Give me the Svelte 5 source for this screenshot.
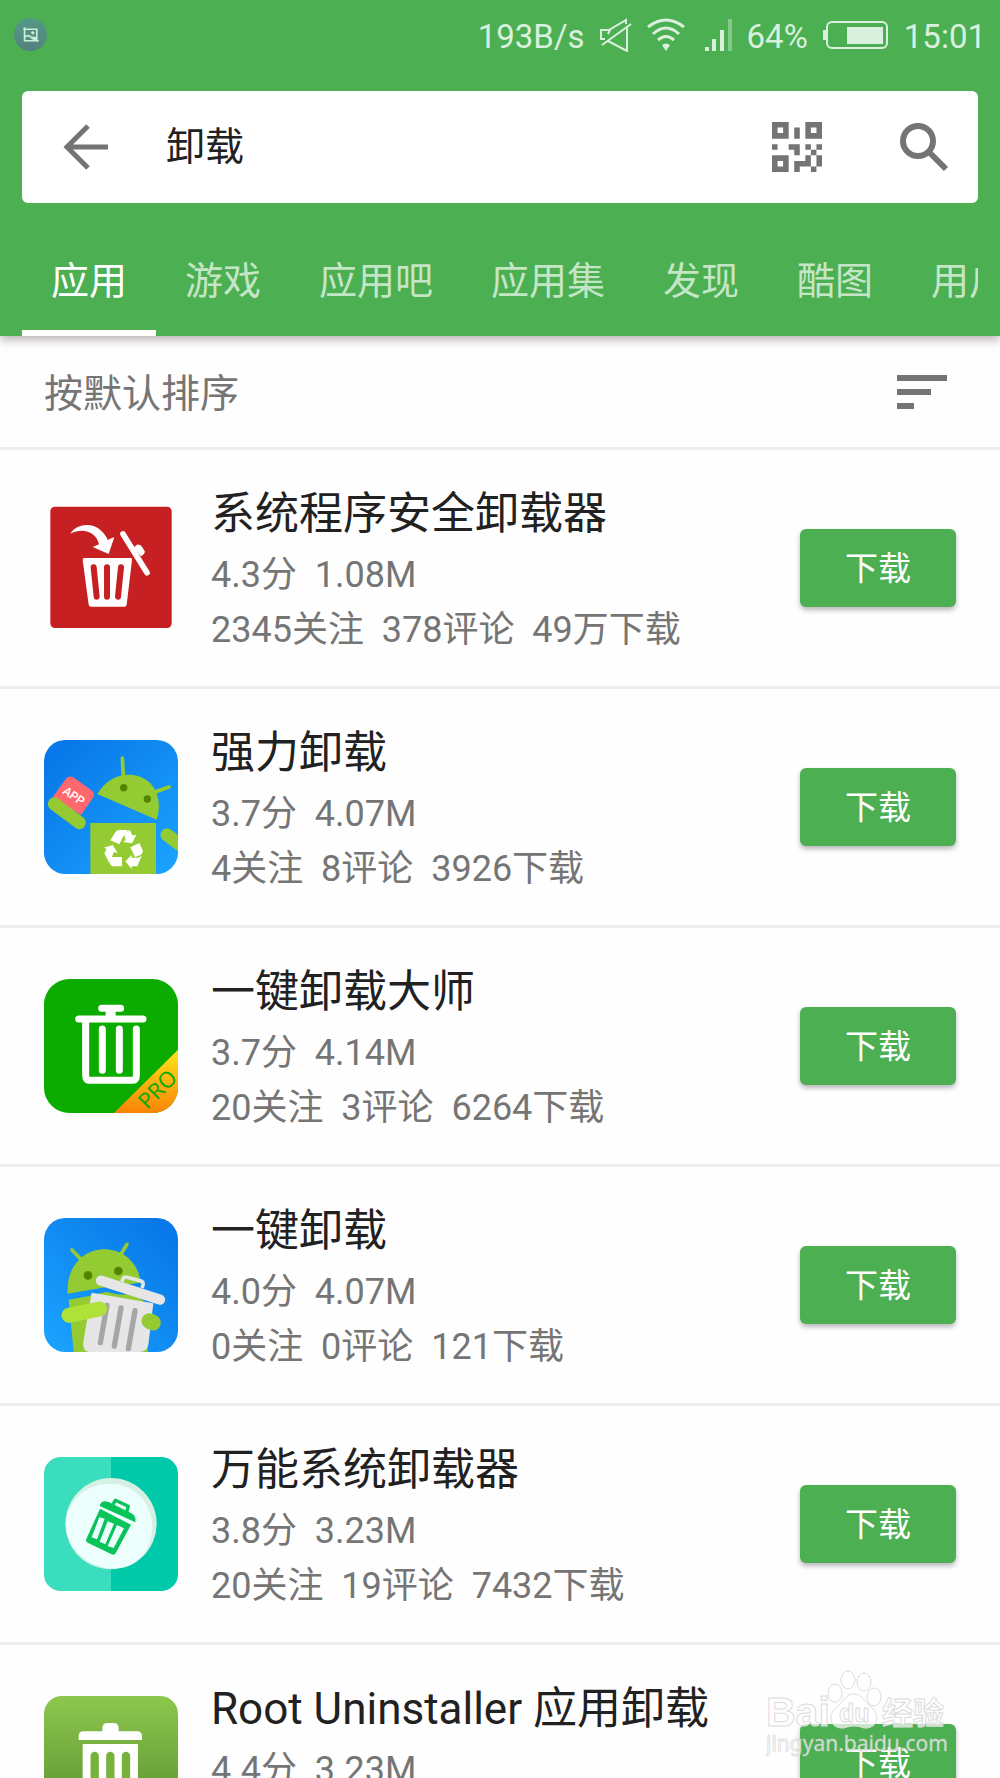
<script lang="ts">
	type App = {
		icon: string;
		name: string;
		score: string;
		size: string;
		follows: string;
		comments: string;
		downloads: string;
	};

	const tabs = ['应用', '游戏', '应用吧', '应用集', '发现', '酷图', '用户'];

	const apps: App[] = [
		{ icon: 'red', name: '系统程序安全卸载器', score: '4.3分', size: '1.08M', follows: '2345关注', comments: '378评论', downloads: '49万下载' },
		{ icon: 'recycle', name: '强力卸载', score: '3.7分', size: '4.07M', follows: '4关注', comments: '8评论', downloads: '3926下载' },
		{ icon: 'pro', name: '一键卸载大师', score: '3.7分', size: '4.14M', follows: '20关注', comments: '3评论', downloads: '6264下载' },
		{ icon: 'droid', name: '一键卸载', score: '4.0分', size: '4.07M', follows: '0关注', comments: '0评论', downloads: '121下载' },
		{ icon: 'teal', name: '万能系统卸载器', score: '3.8分', size: '3.23M', follows: '20关注', comments: '19评论', downloads: '7432下载' },
		{ icon: 'root', name: 'Root Uninstaller 应用卸载', score: '4.4分', size: '3.23M', follows: '', comments: '', downloads: '' }
	];

	let query = $state('卸载');
	let current = $state(0);
</script>

{#snippet appIcon(icon: string)}
	{#if icon === 'red'}
		<svg class="app-icon" viewBox="132 513 402 402" aria-hidden="true">
			<rect x="151" y="530" width="364" height="364" rx="14" fill="#c62022" />
			<path d="M211 611C232 579 278 578 302 601Q318 616 323 630L343 621L326 672L278 651L297 643C289 606 249 592 211 611Z" fill="#fff" />
			<path d="M369 612L441 728" stroke="#fff" stroke-width="17" stroke-linecap="round" />
			<path d="M400 653L411 644Q422 642 428 653L434 664Q436 672 423 679Z" fill="#fff" />
			<path d="M253 684H392Q397 684 396 690L380 824Q379 830 373 830H273Q267 830 266 824L248 690Q248 684 253 684Z" fill="#fff" />
			<path d="M281 712L290 800M321 712V800M363 712L354 800" stroke="#c62022" stroke-width="18" stroke-linecap="round" />
		</svg>
	{:else if icon === 'recycle'}
		<svg class="app-icon" viewBox="42 44 402 402" aria-hidden="true">
			<defs>
				<linearGradient id="sky" x1="0" y1="0" x2="1" y2="1">
					<stop offset="0.1" stop-color="#0878e8" />
					<stop offset="1" stop-color="#1ca4ff" />
				</linearGradient>
				<clipPath id="sky-clip"><rect x="42" y="44" width="402" height="402" rx="64" /></clipPath>
			</defs>
			<g clip-path="url(#sky-clip)">
				<rect x="42" y="44" width="402" height="402" fill="url(#sky)" />
				<path d="M277 98L280 155M375 200L417 185" stroke="#94cb32" stroke-width="11" stroke-linecap="round" />
				<path d="M202 206C230 158 281 137 330 154C378 172 398 226 380 283Z" fill="#94cb32" />
				<circle cx="281" cy="187" r="11" fill="#538400" />
				<circle cx="352" cy="221" r="11" fill="#538400" />
				<path d="M108 160Q119 148 133 158L182 193Q196 203 190 216L153 269L68 216Z" fill="#ff686c" />
				<text class="app-mark" transform="translate(96 202) rotate(35)">APP</text>
				<path d="M73 236L148 292" stroke="#94cb32" stroke-width="39" stroke-linecap="round" />
				<path d="M411 329L460 365" stroke="#94cb32" stroke-width="39" stroke-linecap="round" />
				<path d="M181 293H378V446H181Z" fill="#94cb32" />
				<g fill="#fff">
					<path d="M258 318Q264 314 271 314H292L276 341L268 357L241 345Z" />
					<path d="M283 329Q289 314 300 315L307 330L319 329L306 354L279 350L287 345Z" />
					<path d="M301 366L328 353L338 375Q340 384 330 390L315 395Z" />
					<path d="M335 392L322 423H305V431L286 408L305 389V397H324Z" />
					<path d="M242 395H276V423H247Q241 422 240 414Z" />
					<path d="M221 367L248 359L263 383L252 380L238 414L223 384L230 371Z" />
				</g>
			</g>
		</svg>
	{:else if icon === 'pro'}
		<svg class="app-icon" viewBox="42 40 402 402" aria-hidden="true">
			<defs>
				<linearGradient id="ribbon" x1="0" y1="0" x2="0" y2="1">
					<stop offset="0" stop-color="#ffe619" />
					<stop offset="1" stop-color="#fa8308" />
				</linearGradient>
				<clipPath id="pro-clip"><rect x="42" y="40" width="402" height="402" rx="76" /></clipPath>
			</defs>
			<g clip-path="url(#pro-clip)">
				<rect x="42" y="40" width="402" height="402" fill="#0bab00" />
				<path d="M444 252V442H252Z" fill="url(#ribbon)" />
				<text class="pro-mark" transform="translate(352 434) rotate(-45)">PRO</text>
			</g>
			<g fill="none" stroke="#fff" stroke-linecap="round">
				<path d="M215 128H272M146 160H339" stroke-width="21" />
				<path d="M242 130V158" stroke-width="30" stroke-linecap="butt" />
				<path d="M167 162V330Q167 344 181 344H305Q319 344 319 330V190M217 190V314M268 190V314" stroke-width="21" />
			</g>
		</svg>
	{:else if icon === 'droid'}
		<svg class="app-icon" viewBox="42 38 402 402" aria-hidden="true">
			<defs>
				<linearGradient id="dusk" x1="1" y1="0" x2="0" y2="1">
					<stop offset="0.1" stop-color="#0878e8" />
					<stop offset="1" stop-color="#1ca4ff" />
				</linearGradient>
				<clipPath id="dusk-clip"><rect x="42" y="38" width="402" height="402" rx="64" /></clipPath>
			</defs>
			<g clip-path="url(#dusk-clip)">
				<rect x="42" y="38" width="402" height="402" fill="url(#dusk)" />
				<path d="M126 134L155 164M291 117L270 151" stroke="#94cb32" stroke-width="11" stroke-linecap="round" />
				<path d="M113 265C108 194 150 137 216 132C278 129 326 172 332 232L230 245Z" fill="#94cb32" />
				<path d="M116 283L183 271L330 265L354 440H131Z" fill="#94cb32" />
				<path d="M180 270L230 260L340 284V292L184 276Z" fill="#94cb32" />
				<circle cx="174" cy="210" r="13" fill="#538400" />
				<circle cx="265" cy="197" r="13" fill="#538400" />
				<path d="M185 262L370 294L355 418Q350 440 328 440H178Q157 438 160 410Z" fill="#e6e6e6" />
				<path d="M231 300L211 412M273 308L253 422M315 316L295 430" stroke="#a6a6a6" stroke-width="16" stroke-linecap="round" />
				<path d="M213 226L390 283" stroke="#e6e6e6" stroke-width="31" stroke-linecap="round" />
				<path d="M275 229L280 219Q283 214 291 216L333 227Q341 230 339 238L336 248" fill="none" stroke="#e6e6e6" stroke-width="11" />
				<path d="M117 330L209 311" stroke="#aee239" stroke-width="45" stroke-linecap="round" />
				<path d="M358 347L369 352" stroke="#94cb32" stroke-width="47" stroke-linecap="round" />
			</g>
		</svg>
	{:else if icon === 'teal'}
		<svg class="app-icon" viewBox="42 36 402 402" aria-hidden="true">
			<clipPath id="teal-clip"><rect x="42" y="36" width="402" height="402" rx="50" /></clipPath>
			<g clip-path="url(#teal-clip)">
				<rect x="42" y="36" width="201" height="402" fill="#3bddbf" />
				<rect x="243" y="36" width="201" height="402" fill="#00c9aa" />
			</g>
			<circle cx="243" cy="236" r="137" fill="#d5f0e5" />
			<path d="M108 240C108 170 165 116 240 116C314 116 366 174 366 244C366 305 334 352 286 366C194 387 108 321 108 240Z" fill="#edfffd" />
			<path d="M210 191L303 239L256 326Q252 331 245 328L173 293Q166 289 169 282Z" fill="#08c45b" />
			<path d="M208 217L224 221L201 283L185 277ZM233 229L252 236L226 298L209 290ZM261 240L282 250L251 309L233 303Z" fill="#edfffd" />
			<path d="M209 183Q213 163 236 171L301 203Q320 211 316 232Z" fill="#08c45b" />
			<path d="M249 178L256 166L295 184L290 201" fill="none" stroke="#08c45b" stroke-width="10" stroke-linejoin="round" />
		</svg>
	{:else}
		<svg class="app-icon" viewBox="132 105 402 402" aria-hidden="true">
			<defs>
				<linearGradient id="leaf" x1="0" y1="0" x2="0" y2="1">
					<stop offset="0" stop-color="#8dc74d" />
					<stop offset="1" stop-color="#558b2f" />
				</linearGradient>
			</defs>
			<rect x="132" y="105" width="402" height="402" rx="54" fill="url(#leaf)" />
			<path d="M236 237V226Q236 211 251 211H307V202Q307 186 323 186H340Q356 186 356 202V211H411Q426 211 426 226V237Z" fill="#fff" />
			<path d="M248 249H414V430H248Z" fill="#fff" />
			<path d="M284 285V400M331 285V400M378 285V400" stroke="#78b13c" stroke-width="25" stroke-linecap="round" />
		</svg>
	{/if}
{/snippet}

<div class="screen">
	<header class="top">
		<div class="status">
			<svg class="notice" viewBox="0 0 100 100" aria-hidden="true">
				<defs>
					<linearGradient id="notice-fill" x1="0" y1="0" x2="0" y2="1">
						<stop offset="0" stop-color="#529a86" />
						<stop offset="1" stop-color="#55807f" />
					</linearGradient>
				</defs>
				<circle cx="50" cy="50" r="50" fill="url(#notice-fill)" />
				<g fill="none" stroke="#c9efda" stroke-width="5">
					<path d="M32 28V69H75M28 34H69V72M33 58Q42 48 52 59L59 64H68M52 60Q60 56 67 62" />
				</g>
				<circle cx="57" cy="45" r="5" fill="#c9efda" />
			</svg>
			<span class="speed">193B/s</span>
			<svg width="32" height="34" viewBox="0 0 32 34" fill="none" stroke="currentColor" stroke-width="2" aria-hidden="true">
				<path d="M5 21H1V12H9L26 2V6M2 27L31 6M8 16L10 12M8 23L27 33V9" />
			</svg>
			<svg width="38" height="34" viewBox="0 0 38 34" fill="none" stroke="currentColor" stroke-width="3" aria-hidden="true">
				<path d="M1 9Q19-5 37 9M6 16Q19 4 32 16M11 22Q19 15 27 22" />
				<path d="M15 27Q19 24 23 27L19 33Z" fill="currentColor" stroke="none" />
			</svg>
			<svg width="32" height="34" viewBox="0 0 32 34" fill="currentColor" aria-hidden="true">
				<path d="M5 29H9V33H5ZM12 21H16V33H12ZM20 12H24V33H20Z" />
				<path d="M28 1H32V33H28Z" opacity="0.4" />
			</svg>
			<span>64%</span>
			<svg width="66" height="34" viewBox="0 0 66 34" fill="none" aria-hidden="true">
				<rect x="4" y="4" width="60" height="26" rx="5" stroke="currentColor" stroke-width="2" />
				<path d="M0 12H4V22H0ZM24 9H60V26H24Z" fill="currentColor" />
			</svg>
			<span>15:01</span>
		</div>

		<form class="search" onsubmit={(e) => e.preventDefault()}>
			<button type="button" class="icon-button" aria-label="返回">
				<svg width="46" height="46" viewBox="0 0 46 46" fill="none" stroke="currentColor" stroke-width="5" aria-hidden="true">
					<path d="M45 23H4M25 2L4 23L25 44" />
				</svg>
			</button>
			<input type="text" aria-label="搜索" bind:value={query} />
			<button type="button" class="icon-button" aria-label="扫一扫">
				<svg width="50" height="50" viewBox="0 0 9 9" fill="currentColor" fill-rule="evenodd" aria-hidden="true">
					<path d="M0 0H3V3H0ZM1 1V2H2V1ZM6 0H9V3H6ZM7 1V2H8V1ZM0 6H3V9H0ZM1 7V8H2V7Z" />
					<path d="M4 1H5V3H4ZM0 4H1V5H0ZM3 4H5V6H4V5H3ZM6 4H7V5H6ZM8 4H9V5H8ZM7 5H8V6H7ZM8 6H9V8H8ZM6 6H7V8H5V9H4V7H6ZM7 8H8V9H7Z" />
				</svg>
			</button>
			<button type="submit" class="icon-button find" aria-label="搜索">
				<svg width="50" height="50" viewBox="0 0 50 50" fill="none" stroke="currentColor" aria-hidden="true">
					<circle cx="19" cy="19" r="15" stroke-width="6" />
					<path d="M30 30L47 47" stroke-width="6" />
				</svg>
			</button>
		</form>

		<nav class="tabs">
			{#each tabs as tab, i}
				<button type="button" class="tab" class:active={i === current} onclick={() => (current = i)}>{tab}</button>
			{/each}
		</nav>
	</header>

	<main>
		<div class="sort">
			<span>按默认排序</span>
			<button type="button" class="icon-button" aria-label="排序">
				<svg width="50" height="34" viewBox="0 0 50 34" fill="currentColor" aria-hidden="true">
					<path d="M0 0H50V6H0ZM0 14H34V20H0ZM0 28H17V34H0Z" />
				</svg>
			</button>
		</div>

		<ul class="list">
			{#each apps as app}
				<li class="row">
					{@render appIcon(app.icon)}
					<div class="info">
						<h2>{app.name}</h2>
						<p>{app.score}&nbsp; {app.size}</p>
						<p>{app.follows}&nbsp; {app.comments}&nbsp; {app.downloads}</p>
					</div>
					<button type="button" class="download">下载</button>
				</li>
			{/each}
		</ul>
	</main>

	<svg class="watermark" viewBox="0 0 184 90" aria-hidden="true">
		<g class="outline">
			<text class="brand" x="0" y="56">Bai</text>
			<path d="M88 24C96 24 99 32 106 38C115 46 111 59 98 58Q88 54 78 58C64 59 61 46 70 38C77 32 80 24 88 24Z" />
			<ellipse cx="69" cy="23" rx="7" ry="9" />
			<ellipse cx="82" cy="10" rx="7" ry="9" />
			<ellipse cx="98" cy="12" rx="7" ry="9" />
			<ellipse cx="108" cy="27" rx="7" ry="9" />
			<text class="du" x="73" y="52">du</text>
			<text class="cjk" x="116" y="54">经验</text>
		</g>
		<text class="site" x="0" y="81">jingyan.baidu.com</text>
	</svg>
</div>

<style>
	:global(body) {
		margin: 0;
		background: #fefefe;
	}

	.screen {
		--green: #4caf52;
		--muted: #757575;
		position: relative;
		display: flex;
		flex-direction: column;
		height: 100vh;
		overflow: hidden;
		background: #fefefe;
		color: #212121;
		font-family: Roboto, 'Noto Sans CJK SC', sans-serif;
	}

	button,
	input {
		border: 0;
		padding: 0;
		background: none;
		color: inherit;
		font: inherit;
	}

	svg {
		flex: none;
		display: block;
	}

	.top {
		position: relative;
		z-index: 1;
		flex: none;
		background: var(--green);
		box-shadow: 0 3px 10px rgba(30, 15, 30, 0.36);
	}

	.status {
		display: flex;
		align-items: center;
		gap: 15px;
		height: 69px;
		padding: 0 14px;
		color: #d9f0df;
		font-size: 33px;
	}

	.status span {
		padding-top: 4px;
	}

	.notice {
		width: 33px;
		height: 33px;
	}

	.status .speed {
		margin-left: auto;
	}

	.search {
		display: flex;
		align-items: center;
		gap: 57px;
		height: 112px;
		margin: 22px 22px 0;
		padding: 0 29px 0 41px;
		box-sizing: border-box;
		border-radius: 6px;
		background: #fff;
	}

	.search input {
		flex: 1;
		min-width: 0;
		padding-bottom: 8px;
		color: #212121;
		font-size: 39px;
		outline: none;
	}

	.icon-button {
		flex: none;
		color: #737573;
	}

	.find {
		margin-left: 20px;
	}

	.tabs {
		display: flex;
		height: 111px;
		margin: 22px 22px 0;
		overflow: hidden;
	}

	.tab {
		flex: none;
		padding: 0 29px;
		border-bottom: 6px solid transparent;
		color: #c4e6c6;
		font-size: 38px;
	}

	.tab.active {
		border-bottom-color: #fff;
		color: #fff;
	}

	.sort {
		display: flex;
		align-items: center;
		justify-content: space-between;
		height: 111px;
		padding: 0 53px 0 44px;
		border-bottom: 3px solid #eee;
		color: var(--muted);
		font-size: 39px;
	}

	.sort span {
		padding-bottom: 4px;
	}

	.list {
		margin: 0;
		padding: 0;
		list-style: none;
	}

	.row {
		display: flex;
		align-items: center;
		height: 236px;
		padding: 0 44px;
		border-bottom: 3px solid #eee;
	}

	.app-icon {
		width: 134px;
		height: 134px;
	}

	.app-mark {
		fill: #fff;
		font-size: 36px;
		font-weight: 500;
	}

	.pro-mark {
		fill: #14a800;
		font-family: 'Noto Sans', sans-serif;
		font-size: 66px;
	}

	.info {
		flex: 1;
		min-width: 0;
		margin-left: 33px;
		padding-top: 4px;
		white-space: nowrap;
	}

	h2 {
		margin: 0 0 2px;
		font-size: 44px;
		font-weight: 400;
		line-height: 64px;
	}

	p {
		margin: 0;
		color: var(--muted);
		font-size: 36px;
		line-height: 55px;
	}

	.download {
		flex: none;
		width: 156px;
		height: 78px;
		padding-bottom: 4px;
		border-radius: 6px;
		background: var(--green);
		box-shadow: 0 3px 5px rgba(30, 15, 30, 0.3);
		color: #fff;
		font-size: 33px;
	}

	.watermark {
		position: absolute;
		right: 50px;
		bottom: 18px;
		width: 184px;
		height: 90px;
	}

	.outline {
		fill: rgba(255, 255, 255, 0.7);
		stroke: #dcdcdc;
		stroke-width: 1;
	}

	.brand {
		font-family: 'Liberation Sans', sans-serif;
		font-size: 41px;
		font-weight: 700;
	}

	.du {
		font-family: 'Liberation Sans', sans-serif;
		font-size: 25px;
		font-weight: 700;
	}

	.cjk {
		font-size: 31px;
		font-weight: 700;
	}

	.site {
		fill: rgba(255, 255, 255, 0.75);
		stroke: rgba(190, 190, 190, 0.5);
		stroke-width: 1;
		font-family: 'Noto Sans', sans-serif;
		font-size: 21px;
	}
</style>
